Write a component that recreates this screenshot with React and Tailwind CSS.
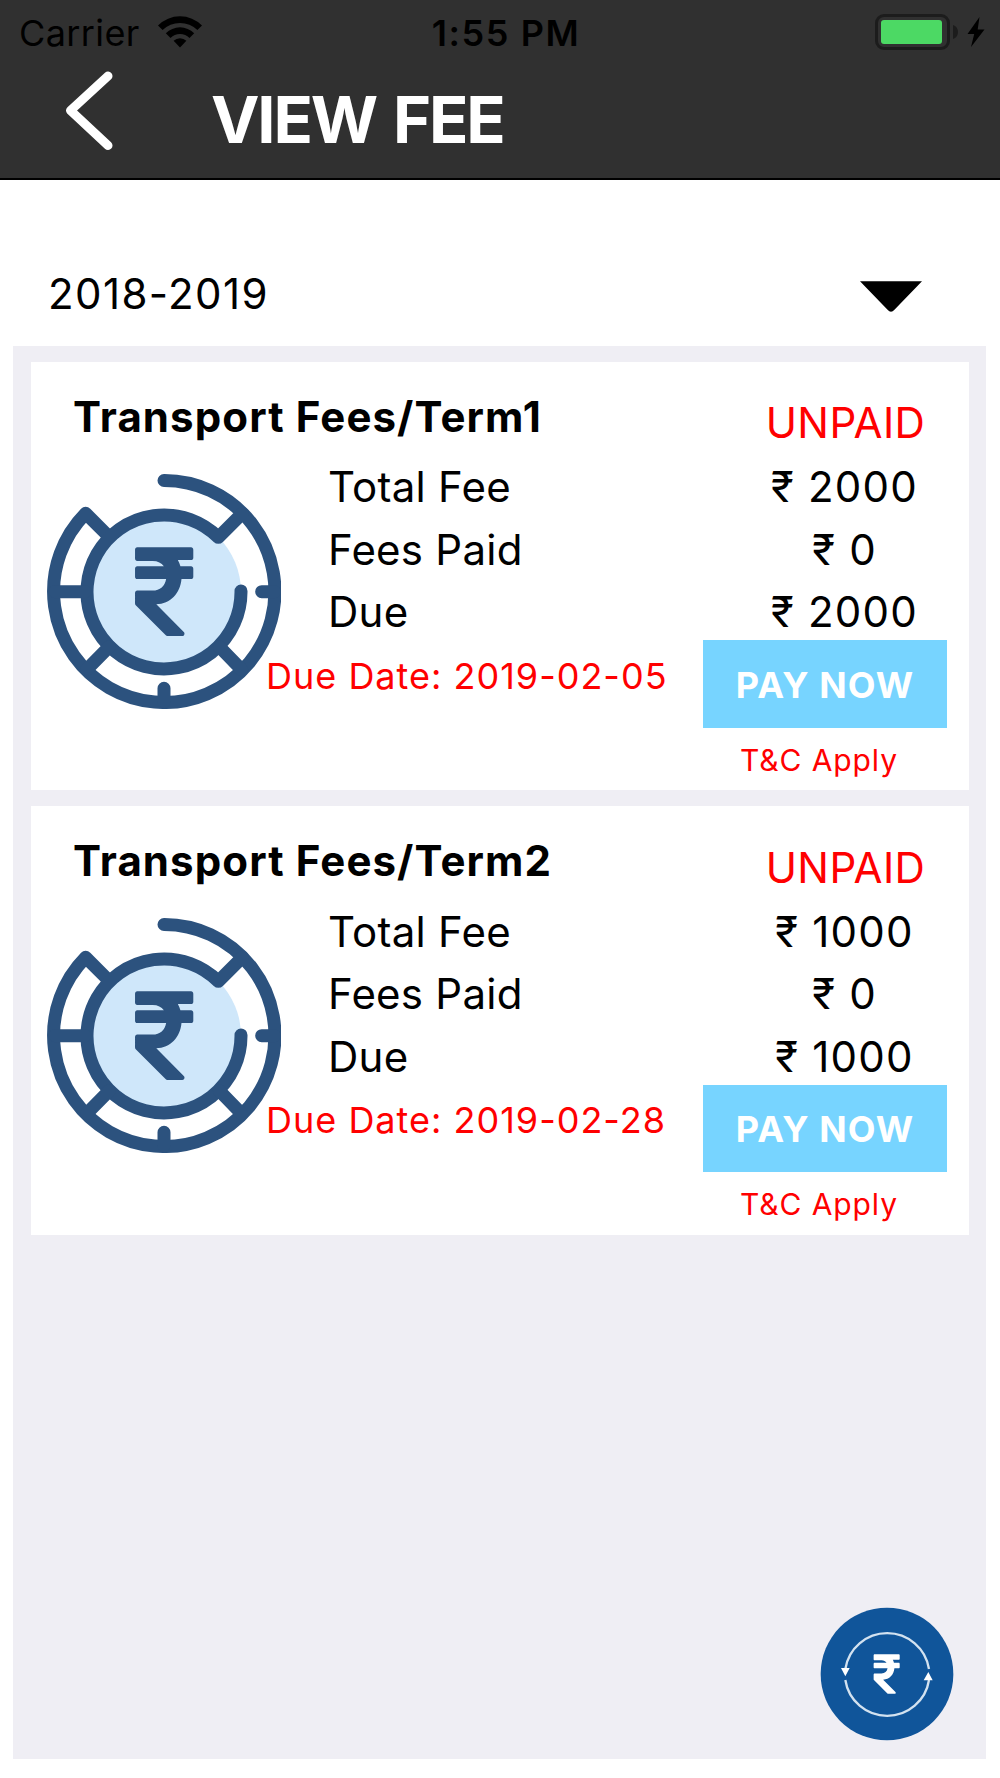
import React, { useState } from "react";
import { FaRupeeSign } from "react-icons/fa";

const fees = [
  { id: 1, title: "Transport Fees/Term1", total: 2000, paid: 0, due: 2000, dueDate: "2019-02-05" },
  { id: 2, title: "Transport Fees/Term2", total: 1000, paid: 0, due: 1000, dueDate: "2019-02-28" },
];

const StatusBar = () => (
  <div className="grid grid-cols-3 items-center h-16 text-[36px] leading-none text-black">
    <div className="flex items-center pl-[19px]">
      <span className="pt-px tracking-[0.4px]">Carrier</span>
      <svg className="ml-[18px] w-11 h-8" viewBox="0 0 44 32">
        <path d="M0 9.500a31 31 0 0 1 44 0l-4.600 4.600a24.600 24.600 0 0 0-34.800 0z" />
        <path d="M7.800 17.200a20.200 20.200 0 0 1 28.400 0l-4.700 4.700a13.500 13.500 0 0 0-19 0z" />
        <path d="M15.600 24.800a9.200 9.200 0 0 1 12.800 0L22 31.400z" />
      </svg>
    </div>
    <span className="pt-px pl-[12px] text-center font-semibold tracking-[1.6px]">1:55 PM</span>
    <div className="flex justify-end items-center pr-[15px]">
      <div className="w-[75px] h-[36px] border-[3px] border-[#1c1c1c] rounded-[9px] p-[3px]">
        <div className="w-[61px] h-6 bg-[#4cd964] rounded-[3px]" />
      </div>
      <svg className="ml-[3px] w-[5px] h-[14px]" viewBox="0 0 5 14">
        <path d="M0 0c3 1 5 3.500 5 7s-2 6-5 7z" fill="#1c1c1c" />
      </svg>
      <svg className="ml-[9px] w-[18px] h-[30px]" viewBox="0 0 18 30">
        <path d="M12.500 0 .5 17h6.700L4 30l13.500-17.500h-6.800z" />
      </svg>
    </div>
  </div>
);

const Header = () => (
  <header className="h-[180px] bg-[#303030] border-b-2 border-black">
    <StatusBar />
    <div className="flex pl-[65px]">
      <button className="mt-[7px] w-12 h-20">
        <svg className="w-12 h-20" viewBox="0 0 48 80" fill="none" stroke="#fff" strokeWidth="9" strokeLinecap="round" strokeLinejoin="round">
          <path d="M43 5 5.500 39.500 43 74.500" />
        </svg>
      </button>
      <h1 className="ml-[98px] mt-[16px] text-[65px] leading-[80px] font-bold tracking-[-2.2px] [word-spacing:4px] text-white">
        VIEW FEE
      </h1>
    </div>
  </header>
);

const CoinIcon = () => (
  <svg className="w-[234px] h-[235px] shrink-0" viewBox="51 42 702 705">
    <circle cx="402" cy="395" r="231" fill="#cfe7fa" />
    <g fill="none" stroke="#2c527e" strokeWidth="39" strokeLinecap="round" strokeLinejoin="round">
      <path d="M402 61.500A332 333 0 1 1 167 160L235 228" />
      <path d="M637 160 565 232A231 231 0 1 0 633 393" />
      <path d="M75 395h90M170 629l68-69M635 629l-67-69M402 685v40M695 395h38" />
    </g>
    <g transform="translate(402.500 395) scale(0.92 1)">
      <FaRupeeSign size={304} x="-152" y="-152" color="#2c527e" />
    </g>
  </svg>
);

const FeeCard = ({ fee }) => (
  <div className="flex justify-between h-[428.500px] bg-white pl-4 pr-[22px] text-[42px]">
    <div>
      <h2 className="pl-[26px] pt-[30px] leading-[50px] font-bold tracking-[1.1px]">{fee.title}</h2>
      <div className="flex mt-[14px]">
        <div className="pt-[18px]">
          <CoinIcon />
        </div>
        <div className="-ml-[15px] pt-[0.5px] leading-[62.500px]">
          <div className="pl-[62px] tracking-[0.25px]">
            <p>Total Fee</p>
            <p>Fees Paid</p>
            <p>Due</p>
          </div>
          <p className="relative mt-px text-[36px] leading-[62.500px] tracking-[1px] text-[#ff0000]">
            Due Date: {fee.dueDate}
          </p>
        </div>
      </div>
    </div>
    <div className="w-[244px] pt-[36.500px] text-center">
      <p className="pl-[41px] leading-[50px] tracking-[0.4px] text-[#ff0000]">UNPAID</p>
      <div className="mt-2 pl-[39px] leading-[62.500px] tracking-[1.2px]">
        <p>₹ {fee.total}</p>
        <p>₹ {fee.paid}</p>
        <p>₹ {fee.due}</p>
      </div>
      <button className="-mt-[3.500px] block w-full h-[87.500px] pt-[2px] bg-[#77d4ff] text-white text-[36px] leading-none font-bold tracking-[1.1px]">
        PAY NOW
      </button>
      <p className="mt-3 pr-[12px] text-[30px] leading-10 tracking-[0.9px] text-[#ff0000]">T&amp;C Apply</p>
    </div>
  </div>
);

const RefreshFeeIcon = () => (
  <svg className="w-[134px] h-[134px]" viewBox="60 50 402 402">
    <circle cx="261" cy="251" r="199" fill="#10559a" />
    <g fill="none" stroke="#d3e2f0" strokeWidth="7">
      <path d="M136 236A127 127 0 0 1 387 236" />
      <path d="M136 269A127 127 0 0 0 387 269" />
    </g>
    <path d="M123 233h26l-13 25zM371 270h27l-13-25z" fill="#fff" />
    <g transform="translate(260 251) scale(0.92 1)">
      <FaRupeeSign size={136} x="-68" y="-68" color="#fff" />
    </g>
  </svg>
);

const App = () => {
  const [year] = useState("2018-2019");

  return (
    <div className="relative flex flex-col h-[1778px] w-[1000px] bg-white font-[Inter,sans-serif] text-black">
      <Header />
      <div className="flex items-center justify-between h-[166px] pt-[61px] pl-[48px] pr-[78px]">
        <span className="text-[42px] leading-[50px] tracking-[1.4px]">{year}</span>
        <svg className="mt-[7px] w-[62px] h-8" viewBox="0 0 63 32">
          <path d="M0 0h63L35 29q-3.500 4-7 0z" />
        </svg>
      </div>

      {/* Fee list */}
      <main className="flex flex-col gap-4 ml-[13px] mr-[14px] pt-[15.500px] pl-[18px] pr-[17px] h-[1413px] bg-[#efeef4]">
        {fees.map((fee) => (
          <FeeCard key={fee.id} fee={fee} />
        ))}
      </main>

      <button className="absolute left-[820px] top-[1607px] rounded-full">
        <RefreshFeeIcon />
      </button>
    </div>
  );
};

export default App;
